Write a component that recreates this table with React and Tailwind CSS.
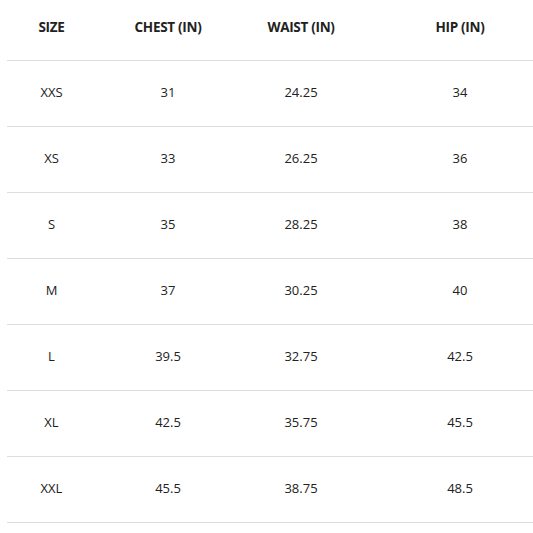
const rows = [
  ['XXS', '31', '24.25', '34'],
  ['XS', '33', '26.25', '36'],
  ['S', '35', '28.25', '38'],
  ['M', '37', '30.25', '40'],
  ['L', '39.5', '32.75', '42.5'],
  ['XL', '42.5', '35.75', '45.5'],
  ['XXL', '45.5', '38.75', '48.5'],
];

const headers = ['SIZE', 'CHEST (IN)', 'WAIST (IN)', 'HIP (IN)'];
const widths = ['w-[89px]', 'w-[144px]', 'w-[122px]', 'w-[196px]'];

export default function App() {
  return (
    <div className="w-[533px] h-[533px] overflow-hidden bg-white font-['Open_Sans',sans-serif] text-[#222]">
      <table className="ml-[7px] w-[551px] table-fixed border-collapse text-[13px]">
        <thead>
          <tr className="h-[60px] border-b border-[#dedede]">
            {headers.map((h, i) => (
              <th key={h} className={`${widths[i]} pb-[6px] text-center font-bold tracking-[-0.3px] text-[13.5px]`}>
                {h}
              </th>
            ))}
          </tr>
        </thead>
        <tbody>
          {rows.map((r) => (
            <tr key={r[0]} className="h-[66px] border-b border-[#dedede]">
              {r.map((c, i) => (
                <td key={i} className="text-center">
                  {c}
                </td>
              ))}
            </tr>
          ))}
        </tbody>
      </table>
    </div>
  );
}
